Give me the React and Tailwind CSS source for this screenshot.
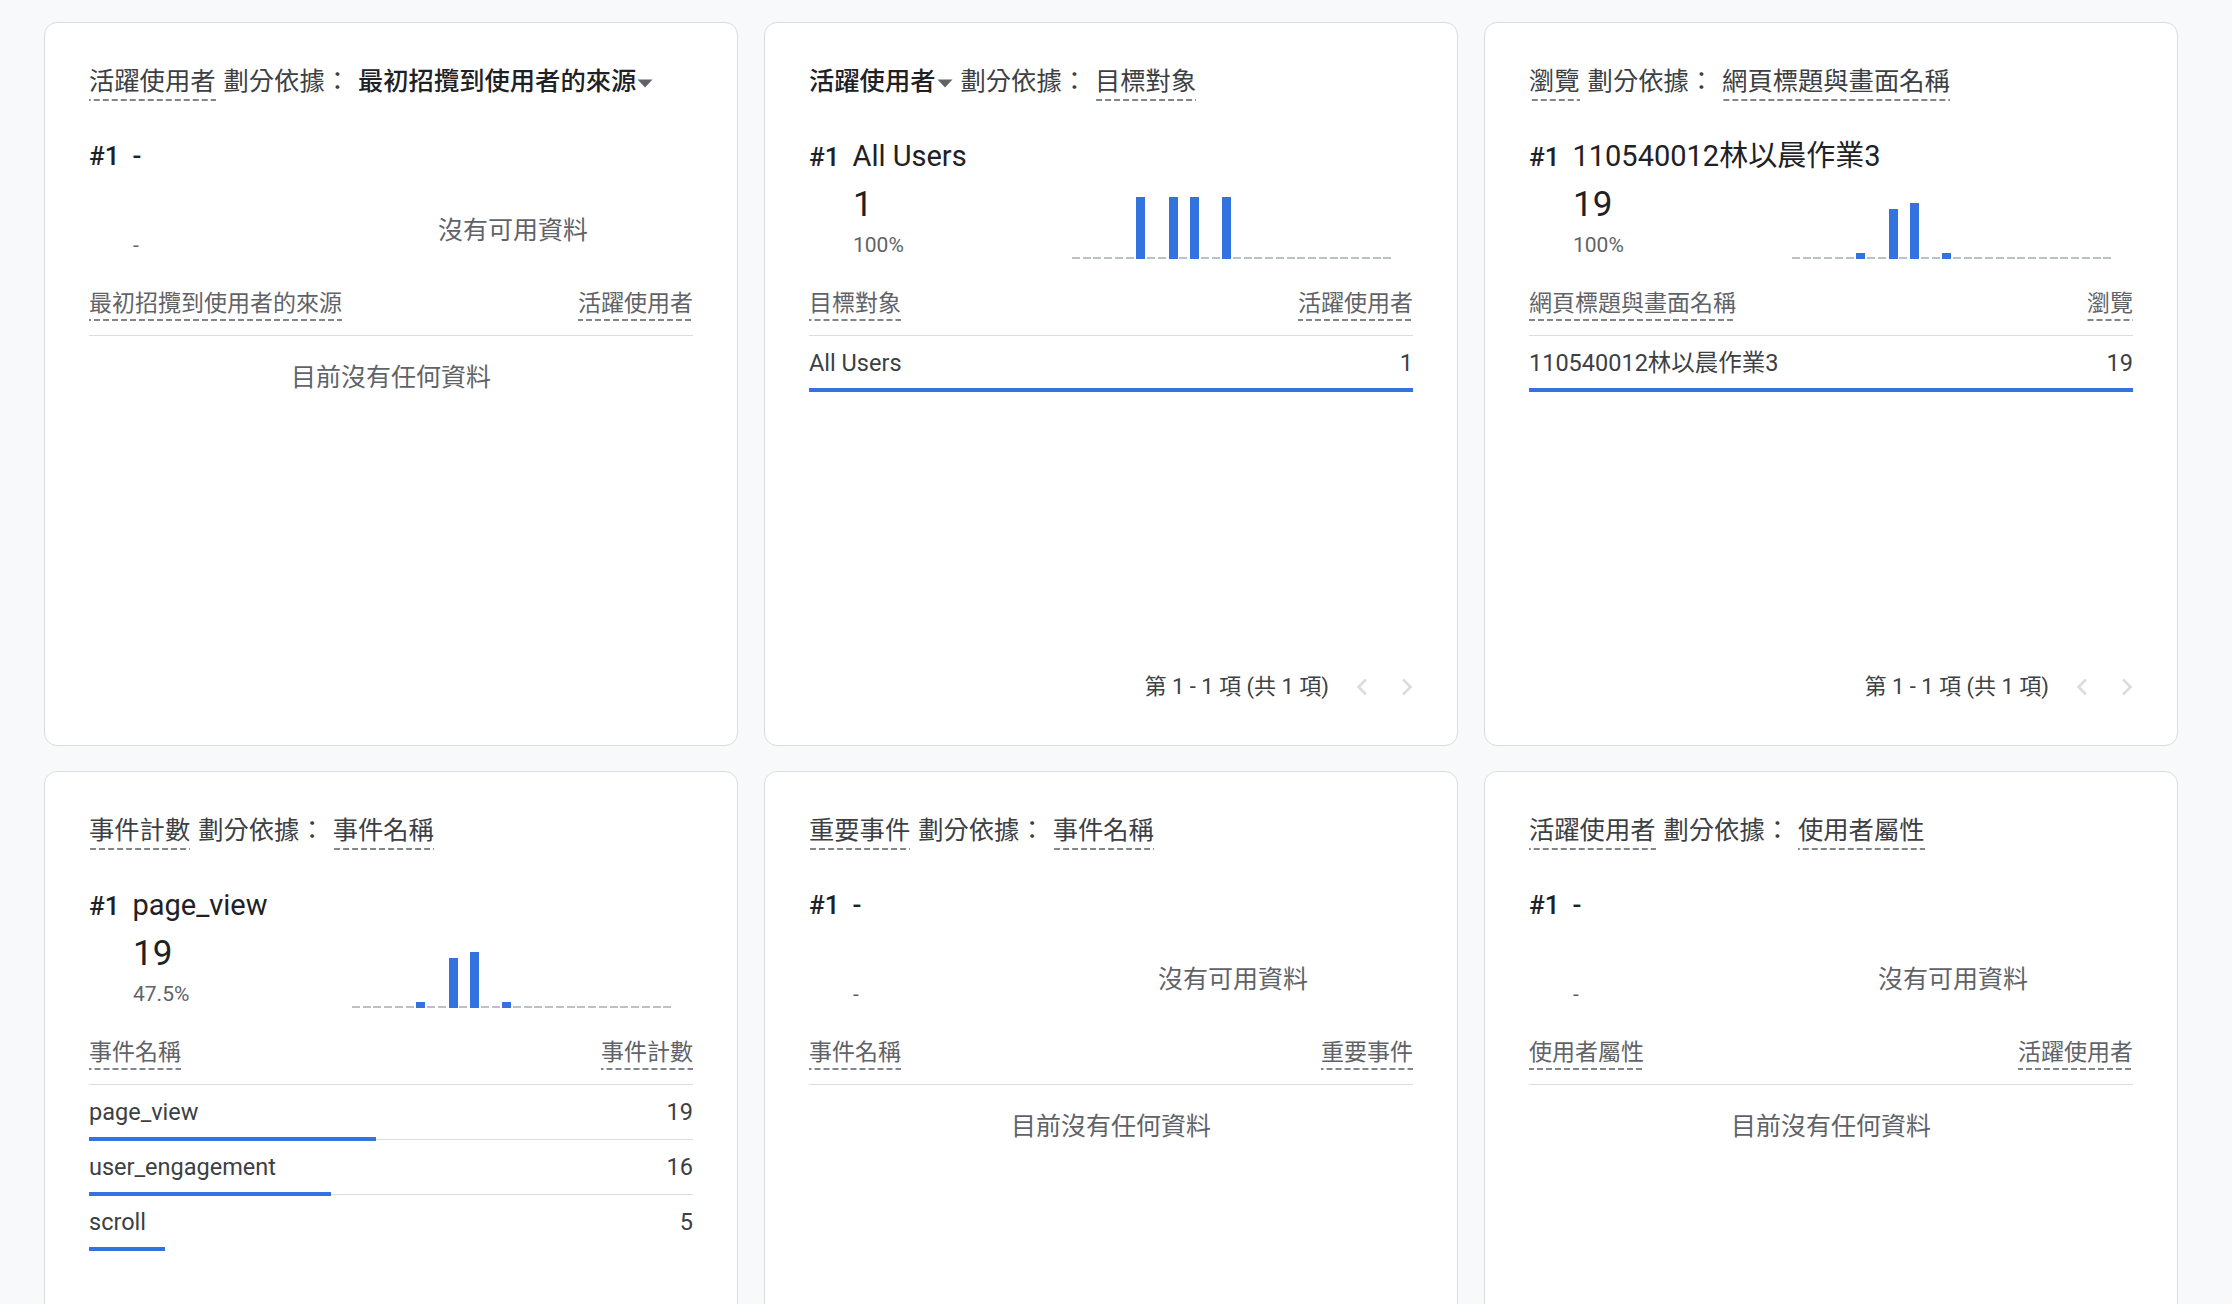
import React from 'react';

function U({ children }) {
  return (
    <span className="inline-block pb-[3px] bg-[linear-gradient(to_right,#80868b_6px,transparent_6px)] bg-[length:9px_2px] bg-repeat-x bg-bottom">
      {children}
    </span>
  );
}

function Drop({ children }) {
  return (
    <span className="inline-flex items-center font-medium text-[#202124]">
      {children}
      <svg width="16" height="9" viewBox="0 0 16 9" className="ml-[1px] mt-[3px]">
        <path d="M0.5 0.5h15L8 8.5z" fill="#5f6368" />
      </svg>
    </span>
  );
}

function Chart({ data, max }) {
  return (
    <div className="mt-[12px] flex h-[62px] w-[322px] items-end">
      {Array.from({ length: 30 }, (_, i) => {
        const v = data[i];
        return (
          <div key={i} className="flex h-full flex-1 items-end">
            {v ? (
              <div className="w-[9px] bg-[#3373e0]" style={{ height: `${(v / max) * 62}px` }} />
            ) : (
              <div className="h-[2px] w-[8px] bg-[#bdc1c6]" />
            )}
          </div>
        );
      })}
    </div>
  );
}

function Chevron({ dir }) {
  return (
    <svg width="12" height="18" viewBox="0 0 12 18">
      <polyline
        points={dir === 'left' ? '10,1.5 2.5,9 10,16.5' : '2,1.5 9.5,9 2,16.5'}
        fill="none"
        stroke="#dadce0"
        strokeWidth="2.6"
      />
    </svg>
  );
}

function Table({ left, right, rows, total }) {
  return (
    <div className="mt-[30px]">
      <div className="flex items-start justify-between border-b border-[#dadce0] pb-[14px] text-[23px] leading-[28px] text-[#5f6368]">
        <U>{left}</U>
        <U>{right}</U>
      </div>
      {rows.length ? (
        <div className="pt-[1px]">
          {rows.map((r, i) => (
            <div key={i}>
              <div className="flex h-[51px] items-center justify-between text-[23.5px] leading-[28px] text-[#3c4043]">
                <span>{r.name}</span>
                <span>{r.value}</span>
              </div>
              <div
                className={
                  i < rows.length - 1
                    ? 'h-[4px] bg-[linear-gradient(#dadce0,#dadce0)] bg-[length:100%_1px] bg-center bg-no-repeat'
                    : 'h-[4px]'
                }
              >
                <div className="h-full bg-[#3373e0]" style={{ width: `${(r.value / total) * 100}%` }} />
              </div>
            </div>
          ))}
        </div>
      ) : (
        <div className="pt-[26px] text-center text-[25px] leading-[32px] text-[#5f6368]">目前沒有任何資料</div>
      )}
    </div>
  );
}

function Card({ title, top, number, percent, chart, left, right, rows, total, pagination }) {
  return (
    <div className="flex h-[724px] flex-col rounded-[13px] border border-[#dadce0] bg-white px-[44px] pt-[43px]">
      <div className="flex items-start gap-[8px] whitespace-nowrap text-[25.3px] leading-[32px] text-[#3c4043]">
        {title}
      </div>
      <div className="mt-[39px] flex h-[32px] items-baseline leading-[32px] text-[#202124]">
        <span className="text-[26px] font-medium">#1</span>
        <span className={top === '-' ? 'ml-[13px] text-[26px] font-medium' : 'ml-[13px] text-[29px]'}>{top}</span>
      </div>
      <div className="mt-[13px] flex h-[75px]">
        <div className="w-[263px] shrink-0 pl-[44px]">
          <div className="h-[40px] text-[35px] leading-[40px] text-[#202124]">{number}</div>
          <div className="mt-[6px] text-[21px] leading-[28px] text-[#5f6368]">{percent}</div>
        </div>
        {chart ? (
          <Chart data={chart.data} max={chart.max} />
        ) : (
          <div className="mt-[12px] flex h-[62px] w-[322px] items-center justify-center pt-[6px] text-[25px] leading-[32px] text-[#5f6368]">
            沒有可用資料
          </div>
        )}
      </div>
      <Table left={left} right={right} rows={rows} total={total} />
      {pagination && (
        <div className="mt-auto flex items-center justify-end pb-[44px] text-[22px] leading-[28px] text-[#3c4043]">
          <span>第 1 - 1 項 (共 1 項)</span>
          <span className="ml-[27px] flex">
            <Chevron dir="left" />
          </span>
          <span className="ml-[33px] flex">
            <Chevron dir="right" />
          </span>
        </div>
      )}
    </div>
  );
}

const spike = { data: { 6: 1, 9: 8, 11: 9, 14: 1 }, max: 10 };

export default function App() {
  return (
    <div className="h-[1304px] overflow-hidden bg-[#f8f9fa] pl-[44px] pr-[54px] pt-[22px] font-['Roboto','Noto_Sans_CJK_TC',sans-serif]">
      <div className="grid grid-cols-3 gap-x-[26px] gap-y-[25px]">
        <Card
          title={
            <>
              <U>活躍使用者</U>
              <span>劃分依據：</span>
              <Drop>最初招攬到使用者的來源</Drop>
            </>
          }
          top="-"
          number=""
          percent="-"
          chart={null}
          left="最初招攬到使用者的來源"
          right="活躍使用者"
          rows={[]}
        />
        <Card
          title={
            <>
              <Drop>活躍使用者</Drop>
              <span>劃分依據：</span>
              <U>目標對象</U>
            </>
          }
          top="All Users"
          number="1"
          percent="100%"
          chart={{ data: { 6: 1, 9: 1, 11: 1, 14: 1 }, max: 1 }}
          left="目標對象"
          right="活躍使用者"
          rows={[{ name: 'All Users', value: 1 }]}
          total={1}
          pagination
        />
        <Card
          title={
            <>
              <U>瀏覽</U>
              <span>劃分依據：</span>
              <U>網頁標題與畫面名稱</U>
            </>
          }
          top="110540012林以晨作業3"
          number="19"
          percent="100%"
          chart={spike}
          left="網頁標題與畫面名稱"
          right="瀏覽"
          rows={[{ name: '110540012林以晨作業3', value: 19 }]}
          total={19}
          pagination
        />
        <Card
          title={
            <>
              <U>事件計數</U>
              <span>劃分依據：</span>
              <U>事件名稱</U>
            </>
          }
          top="page_view"
          number="19"
          percent="47.5%"
          chart={spike}
          left="事件名稱"
          right="事件計數"
          rows={[
            { name: 'page_view', value: 19 },
            { name: 'user_engagement', value: 16 },
            { name: 'scroll', value: 5 },
          ]}
          total={40}
        />
        <Card
          title={
            <>
              <U>重要事件</U>
              <span>劃分依據：</span>
              <U>事件名稱</U>
            </>
          }
          top="-"
          number=""
          percent="-"
          chart={null}
          left="事件名稱"
          right="重要事件"
          rows={[]}
        />
        <Card
          title={
            <>
              <U>活躍使用者</U>
              <span>劃分依據：</span>
              <U>使用者屬性</U>
            </>
          }
          top="-"
          number=""
          percent="-"
          chart={null}
          left="使用者屬性"
          right="活躍使用者"
          rows={[]}
        />
      </div>
    </div>
  );
}
